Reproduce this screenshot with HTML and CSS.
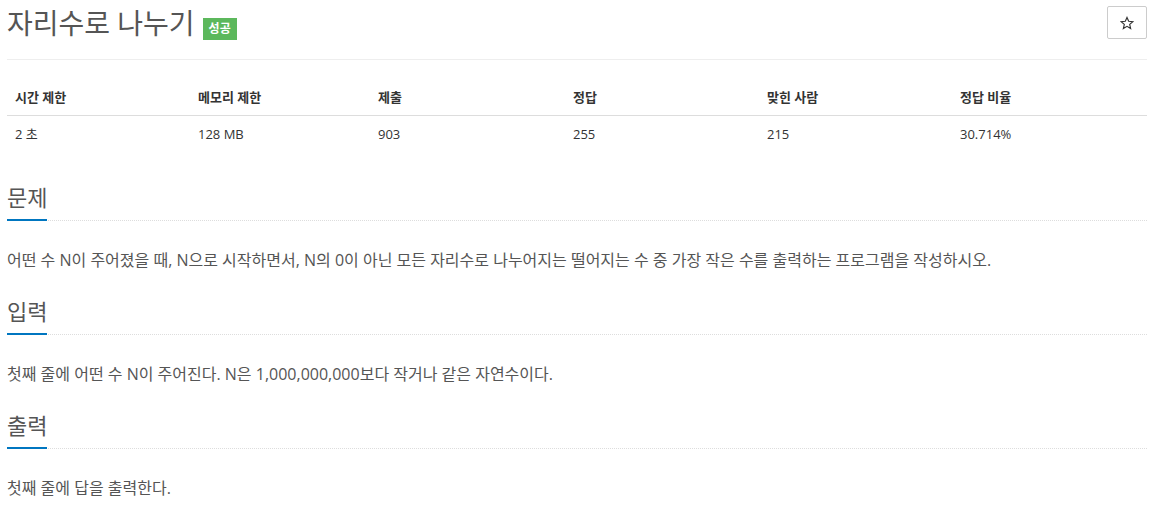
FILE: index.html
```html
<!DOCTYPE html>
<html lang="ko">
<head>
<meta charset="utf-8">
<title>자리수로 나누기</title>
<link rel="stylesheet" href="styles.css">
</head>
<body>
<div class="page">
  <div class="title-row">
    <h1 class="title"><span class="title-text">자리수로 나누기</span><span class="badge">성공</span></h1>
    <button class="star-btn" type="button" aria-label="즐겨찾기">
      <svg width="14" height="14" viewBox="0 0 24 24"><path d="M12 2.5l2.9 6.6 7.1.6-5.4 4.7 1.6 7-6.2-3.7-6.2 3.7 1.6-7L2 9.7l7.1-.6z" fill="none" stroke="#333" stroke-width="2" stroke-linejoin="miter"/></svg>
    </button>
  </div>
  <div class="rule"></div>

  <table class="info">
    <thead>
      <tr>
        <th class="c1">시간 제한</th>
        <th class="c2">메모리 제한</th>
        <th class="c3">제출</th>
        <th class="c4">정답</th>
        <th class="c5">맞힌 사람</th>
        <th class="c6">정답 비율</th>
      </tr>
    </thead>
    <tbody>
      <tr>
        <td>2 초</td>
        <td>128 MB</td>
        <td>903</td>
        <td>255</td>
        <td>215</td>
        <td>30.714%</td>
      </tr>
    </tbody>
  </table>

  <section class="section">
    <div class="headline"><h2>문제</h2></div>
    <p class="text">어떤 수 N이 주어졌을 때, N으로 시작하면서, N의 0이 아닌 모든 자리수로 나누어지는 떨어지는 수 중 가장 작은 수를 출력하는 프로그램을 작성하시오.</p>
  </section>

  <section class="section">
    <div class="headline"><h2>입력</h2></div>
    <p class="text">첫째 줄에 어떤 수 N이 주어진다. N은 1,000,000,000보다 작거나 같은 자연수이다.</p>
  </section>

  <section class="section">
    <div class="headline"><h2>출력</h2></div>
    <p class="text">첫째 줄에 답을 출력한다.</p>
  </section>
</div>
</body>
</html>
```

FILE: styles.css
```css
html, body {
  margin: 0;
  padding: 0;
  background: #fff;
}

body {
  font-family: "Open Sans", "Noto Sans CJK KR", sans-serif;
  color: #333;
  font-size: 14px;
}

.page {
  padding: 0 8px 0 7px;
}

.title-row {
  display: flex;
  justify-content: space-between;
  align-items: flex-start;
  padding-top: 6px;
  height: 59px;
  box-sizing: border-box;
}

.title {
  margin: 0;
  font-size: 28px;
  font-weight: 400;
  line-height: 34px;
  color: #555;
  display: flex;
  align-items: flex-start;
}

.badge {
  display: inline-block;
  margin-left: 8px;
  margin-top: 12px;
  background: #5cb85c;
  color: #fff;
  font-size: 12px;
  font-weight: 700;
  line-height: 22px;
  height: 22px;
  padding: 0 6px;
}

.star-btn {
  width: 40px;
  height: 33px;
  border: 1px solid #ccc;
  border-radius: 2px;
  background: #fff;
  padding: 0;
  display: flex;
  align-items: center;
  justify-content: center;
}

.rule {
  border-top: 1px solid #eee;
}

.info {
  width: 100%;
  border-collapse: collapse;
  margin-top: 19px;
  font-size: 13px;
  color: #333;
}

.info th,
.info td {
  text-align: left;
  padding: 8px;
  line-height: 20px;
}

.info th {
  font-weight: 700;
  border-bottom: 1px solid #ddd;
}

.c1 { width: 167px; }
.c2 { width: 164px; }
.c3 { width: 179px; }
.c4 { width: 178px; }
.c5 { width: 177px; }

.section {
  margin-top: 30px;
}

.section + .section {
  margin-top: 24px;
}

.headline {
  border-bottom: 1px dotted #ddd;
}

.headline h2 {
  display: inline-block;
  margin: 0 0 -1px;
  font-size: 22px;
  font-weight: 400;
  line-height: 30px;
  padding-bottom: 7px;
  color: #555;
  border-bottom: 2px solid #0076c0;
}

.text {
  margin: 27px 0 0;
  font-size: 16px;
  line-height: 24px;
  color: #555;
}
```
